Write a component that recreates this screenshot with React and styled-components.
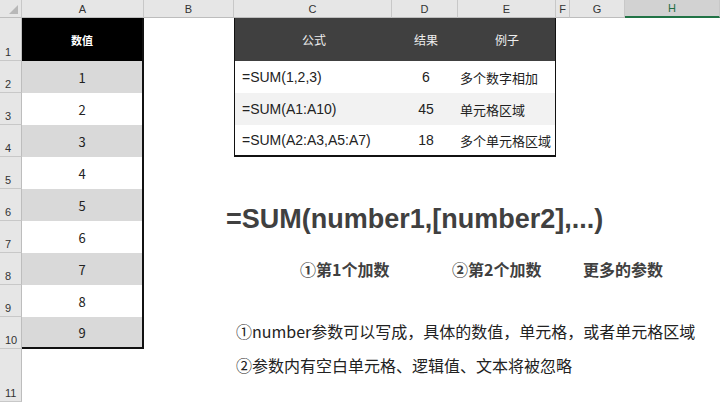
import styled, { createGlobalStyle } from 'styled-components';

const GlobalStyle = createGlobalStyle`
  body { margin: 0; background: #fff; font-family: "Microsoft YaHei", "Noto Sans CJK SC", sans-serif; }
`;

const COLS = ['A', 'B', 'C', 'D', 'E', 'F', 'G', 'H'];
const WIDTHS = '22px 122px 90px 158px 66px 98px 14px 55px 95px';
const VALUES = [1, 2, 3, 4, 5, 6, 7, 8, 9];
const ROWS = [
  ['=SUM(1,2,3)', '6', '多个数字相加'],
  ['=SUM(A1:A10)', '45', '单元格区域'],
  ['=SUM(A2:A3,A5:A7)', '18', '多个单元格区域'],
];

const Sheet = styled.div`
  display: grid;
  grid-template-columns: ${WIDTHS};
  grid-template-rows: 18px 43px repeat(9, 32px) 53px;
  width: 720px;
  height: 402px;
  overflow: hidden;
  color: #222;
`;

const Corner = styled.div`
  background: #e6e6e6;
  border-right: 1px solid #c8c8c8;
  border-bottom: 1px solid #bdbdbd;
  position: relative;
  &::after {
    content: '';
    position: absolute;
    right: 3px;
    bottom: 3px;
    border-left: 9px solid transparent;
    border-bottom: 9px solid #b8b8b8;
  }
`;

const ColHead = styled.div`
  background: ${(p) => (p.$active ? '#d2d2d2' : '#e6e6e6')};
  border-right: 1px solid #c8c8c8;
  border-bottom: ${(p) => (p.$active ? '2px solid #217346' : '1px solid #bdbdbd')};
  font: 11px "Liberation Sans", sans-serif;
  color: ${(p) => (p.$active ? '#1e6e42' : '#333')};
  display: flex;
  align-items: center;
  justify-content: center;
`;

const RowHead = styled.div`
  grid-column: 1;
  grid-row: ${(p) => p.$row};
  background: #e6e6e6;
  border-right: 1px solid #bdbdbd;
  border-bottom: 1px solid #c8c8c8;
  font: 11px "Liberation Sans", sans-serif;
  color: #333;
  display: flex;
  align-items: flex-end;
  padding: 0 0 2px 5px;
`;

const ACell = styled.div`
  grid-column: 2;
  grid-row: ${(p) => p.$row};
  background: ${(p) => p.$bg};
  color: ${(p) => (p.$head ? '#fff' : '#222')};
  font-weight: ${(p) => (p.$head ? 700 : 400)};
  font-size: ${(p) => (p.$head ? '11px' : '13px')};
  border-right: 2px solid #111;
  border-bottom: ${(p) => (p.$last ? '2px solid #111' : 'none')};
  display: flex;
  align-items: center;
  justify-content: center;
`;

const Table = styled.div`
  grid-column: 4 / 7;
  grid-row: 2 / 6;
  display: grid;
  grid-template-columns: 158px 66px 96px;
  grid-template-rows: 43px 32px 32px 30px;
  border-right: 2px solid #111;
  border-bottom: 2px solid #111;
  border-left: 1px solid #111;
`;

const TCell = styled.div`
  background: ${(p) => (p.$head ? '#404040' : p.$alt ? '#f2f2f2' : '#fff')};
  color: ${(p) => (p.$head ? '#eee' : '#222')};
  font-size: ${(p) => (p.$head ? '12px' : p.$mono ? '14px' : '13px')};
  white-space: nowrap;
  overflow: hidden;
  display: flex;
  align-items: center;
  justify-content: ${(p) => p.$align};
  padding-left: ${(p) => (p.$align === 'flex-start' ? (p.$mono ? '7px' : '1px') : '0')};
  font-family: ${(p) => (p.$mono ? '"Liberation Sans", sans-serif' : 'inherit')};
`;

const Notes = styled.div`
  grid-column: 3 / 10;
  grid-row: 6 / 13;
  padding: 47px 0 0 82px;
  color: #404040;
`;

const Formula = styled.div`
  font: 700 27px "Liberation Sans", Arial, sans-serif;
`;

const Params = styled.div`
  display: flex;
  margin: 22px 0 0 74px;
  font-size: 16px;
  font-weight: 700;
  & > span:nth-child(1) { width: 152px; }
  & > span:nth-child(2) { width: 131px; }
`;

const Line = styled.div`
  font-size: 16px;
  color: #222;
  margin-left: 10px;
  margin-top: ${(p) => p.$top};
`;

export default function App() {
  return (
    <>
      <GlobalStyle />
      <Sheet>
        <Corner />
        {COLS.map((c) => (
          <ColHead key={c} $active={c === 'H'}>{c}</ColHead>
        ))}
        {[1, 2, 3, 4, 5, 6, 7, 8, 9, 10, 11].map((n) => (
          <RowHead key={n} $row={n + 1}>{n}</RowHead>
        ))}
        <ACell $row={2} $head $bg="#000">数值</ACell>
        {VALUES.map((v, i) => (
          <ACell key={v} $row={i + 3} $bg={i % 2 === 0 ? '#d9d9d9' : '#fff'} $last={i === 8}>
            {v}
          </ACell>
        ))}
        <Table>
          <TCell $head $align="center">公式</TCell>
          <TCell $head $align="center">结果</TCell>
          <TCell $head $align="center">例子</TCell>
          {ROWS.map((r, i) => [
            <TCell key={`a${i}`} $alt={i === 1} $align="flex-start" $mono>{r[0]}</TCell>,
            <TCell key={`b${i}`} $alt={i === 1} $align="center" $mono>{r[1]}</TCell>,
            <TCell key={`c${i}`} $alt={i === 1} $align="flex-start">{r[2]}</TCell>,
          ])}
        </Table>
        <Notes>
          <Formula>=SUM(number1,[number2],...)</Formula>
          <Params>
            <span>①第1个加数</span>
            <span>②第2个加数</span>
            <span>更多的参数</span>
          </Params>
          <Line $top="38px">①number参数可以写成，具体的数值，单元格，或者单元格区域</Line>
          <Line $top="10px">②参数内有空白单元格、逻辑值、文本将被忽略</Line>
        </Notes>
      </Sheet>
    </>
  );
}
